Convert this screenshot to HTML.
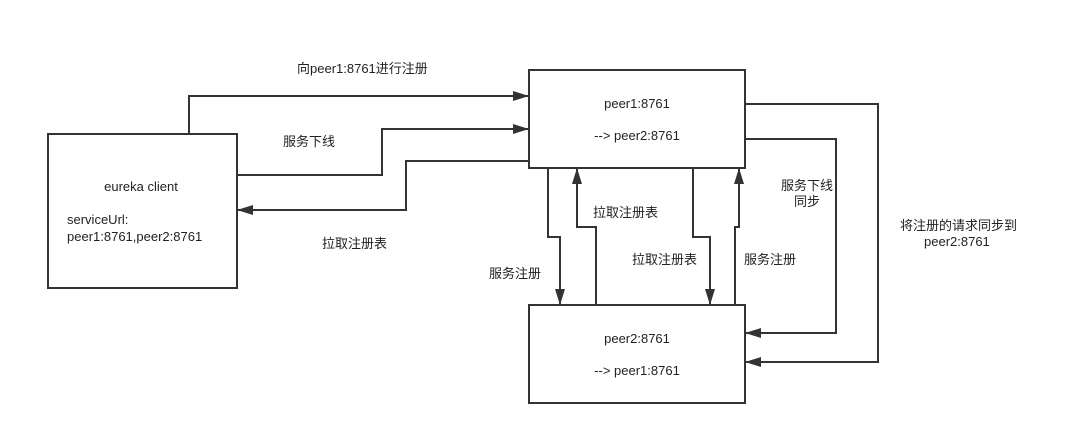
<!DOCTYPE html>
<html><head><meta charset="utf-8"><style>
html,body{margin:0;padding:0;background:#fff;}
svg{display:block}
text{font-family:"Liberation Sans","Noto Sans CJK SC",sans-serif;font-size:13px;fill:#222;}
</style></head><body>
<svg width="1072" height="436" viewBox="0 0 1072 436">
<defs><marker id="a" markerWidth="10" markerHeight="8" refX="9" refY="4" orient="auto" markerUnits="userSpaceOnUse"><path d="M0,0 L10,4 L0,8 L2,4 Z" fill="#333"/></marker>
<marker id="b" markerWidth="16" markerHeight="10" refX="15" refY="5" orient="auto" markerUnits="userSpaceOnUse"><path d="M0,0 L16,5 L0,10 Z" fill="#333"/></marker></defs>
<g fill="none" stroke="#333" stroke-width="2">
<rect x="48" y="134" width="189" height="154"/>
<rect x="529" y="70" width="216" height="98"/>
<rect x="529" y="305" width="216" height="98"/>
<polyline points="189,134 189,96 528,96" marker-end="url(#b)"/>
<polyline points="237,175 382,175 382,129 528,129" marker-end="url(#b)"/>
<polyline points="529,161 406,161 406,210 238,210" marker-end="url(#b)"/>
<polyline points="548,168 548,237 560,237 560,304" marker-end="url(#b)"/>
<polyline points="596,305 596,227 577,227 577,169" marker-end="url(#b)"/>
<polyline points="693,168 693,237 710,237 710,304" marker-end="url(#b)"/>
<polyline points="735,305 735,227 739,227 739,169" marker-end="url(#b)"/>
<polyline points="745,139 836,139 836,333 746,333" marker-end="url(#b)"/>
<polyline points="745,104 878,104 878,362 746,362" marker-end="url(#b)"/>
</g>
<text x="141" y="191" text-anchor="middle">eureka client</text>
<text x="67" y="224">serviceUrl:</text>
<text x="67" y="241">peer1:8761,peer2:8761</text>
<text x="637" y="108" text-anchor="middle">peer1:8761</text>
<text x="637" y="140" text-anchor="middle">--&gt; peer2:8761</text>
<text x="637" y="343" text-anchor="middle">peer2:8761</text>
<text x="637" y="375" text-anchor="middle">--&gt; peer1:8761</text>
<text x="297" y="73">向peer1:8761进行注册</text>
<text x="283" y="146">服务下线</text>
<text x="322" y="248">拉取注册表</text>
<text x="489" y="278">服务注册</text>
<text x="593" y="217">拉取注册表</text>
<text x="632" y="264">拉取注册表</text>
<text x="744" y="264">服务注册</text>
<text x="781" y="190">服务下线</text>
<text x="794" y="206">同步</text>
<text x="900" y="230">将注册的请求同步到</text>
<text x="924" y="246">peer2:8761</text>
</svg>
</body></html>
